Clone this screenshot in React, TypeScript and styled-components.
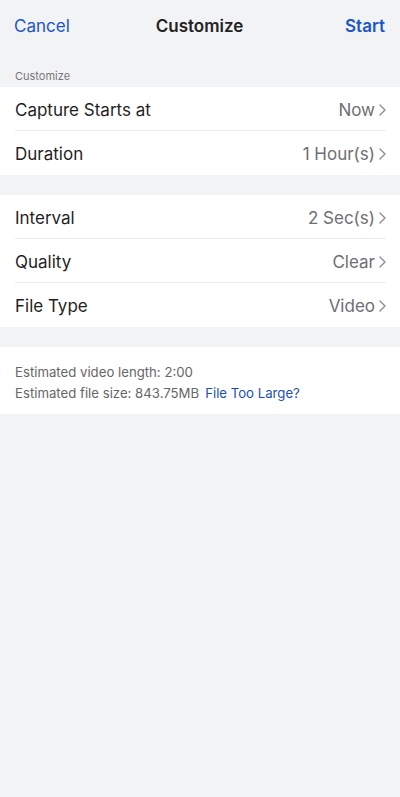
import React from "react";
import styled, { createGlobalStyle } from "styled-components";

const Global = createGlobalStyle`
  html, body { margin: 0; padding: 0; background: #f2f3f5; }
  body { font-family: Inter, "Noto Sans", sans-serif; -webkit-font-smoothing: antialiased; }
`;

const Page = styled.div`
  width: 400px;
  min-height: 797px;
  background: #f2f3f5;
  display: flex;
  flex-direction: column;
`;

const NavBar = styled.div`
  height: 52px;
  display: grid;
  grid-template-columns: 1fr auto 1fr;
  align-items: center;
  padding: 0 15px 0 14px;
`;

const NavButton = styled.span<{ $bold?: boolean; $right?: boolean }>`
  font-size: 17px;
  color: #1a56c8;
  font-weight: ${(p) => (p.$bold ? 600 : 400)};
  justify-self: ${(p) => (p.$right ? "end" : "start")};
`;

const Title = styled.span`
  font-size: 17px;
  font-weight: 600;
  color: #222;
`;

const SectionHeader = styled.div`
  font-size: 11px;
  color: #777;
  padding: 18px 15px 4px;
  line-height: 13px;
`;

const Card = styled.div<{ $gap?: number }>`
  background: #fff;
  margin-top: ${(p) => p.$gap ?? 0}px;
  display: flex;
  flex-direction: column;
`;

const Row = styled.div<{ $last?: boolean }>`
  height: 44px;
  margin-left: 15px;
  margin-right: 14px;
  display: flex;
  align-items: center;
  justify-content: space-between;
  border-bottom: ${(p) => (p.$last ? "none" : "1px solid #ececee")};
  box-sizing: border-box;
`;

const Label = styled.span`
  font-size: 17px;
  color: #1f1f1f;
  padding-top: 2px;
`;

const ValueWrap = styled.span`
  display: flex;
  align-items: center;
  gap: 4px;
  font-size: 17px;
  color: #6e6e73;
  padding-top: 2px;
`;

const Info = styled.div`
  background: #fff;
  margin-top: 20px;
  padding: 16px 15px 12px;
  display: flex;
  flex-direction: column;
  gap: 3px;
`;

const InfoLine = styled.div`
  font-size: 13.2px;
  line-height: 18px;
  color: #666;
`;

const Link = styled.span`
  color: #1a4fb8;
  margin-left: 6px;
`;

const Chevron = () => (
  <svg width="7" height="12" viewBox="0 0 7 12" fill="none">
    <path d="M1 1l5 5-5 5" stroke="#8e8e93" strokeWidth="1.4" strokeLinecap="round" strokeLinejoin="round" />
  </svg>
);

const SettingRow = ({ label, value, last }: { label: string; value: string; last?: boolean }) => (
  <Row $last={last}>
    <Label>{label}</Label>
    <ValueWrap>
      {value}
      <Chevron />
    </ValueWrap>
  </Row>
);

export default function App() {
  return (
    <Page>
      <Global />
      <NavBar>
        <NavButton>Cancel</NavButton>
        <Title>Customize</Title>
        <NavButton $bold $right>Start</NavButton>
      </NavBar>
      <SectionHeader>Customize</SectionHeader>
      <Card>
        <SettingRow label="Capture Starts at" value="Now" />
        <SettingRow label="Duration" value="1 Hour(s)" last />
      </Card>
      <Card $gap={20}>
        <SettingRow label="Interval" value="2 Sec(s)" />
        <SettingRow label="Quality" value="Clear" />
        <SettingRow label="File Type" value="Video" last />
      </Card>
      <Info>
        <InfoLine>Estimated video length: 2:00</InfoLine>
        <InfoLine>
          Estimated file size: 843.75MB<Link>File Too Large?</Link>
        </InfoLine>
      </Info>
    </Page>
  );
}
